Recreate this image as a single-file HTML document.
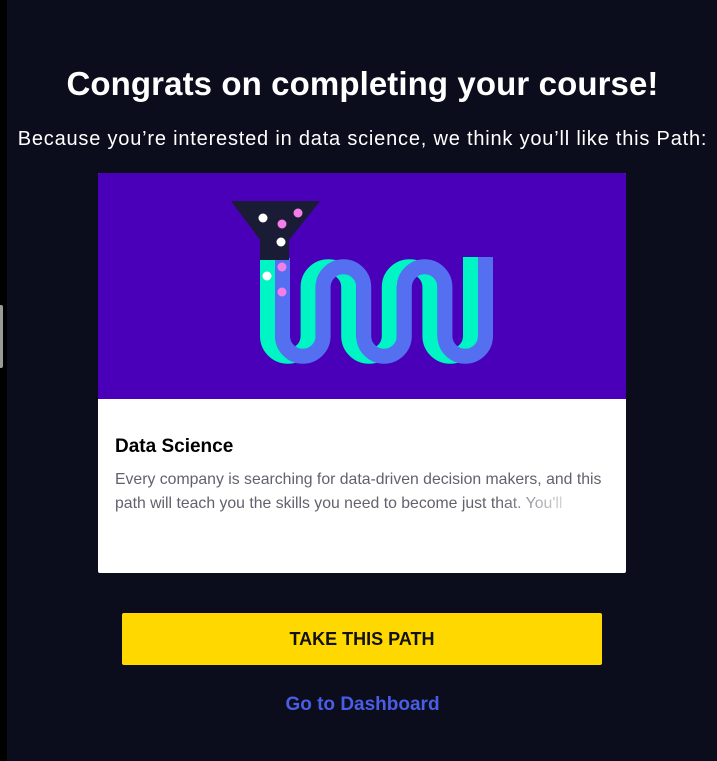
<!DOCTYPE html>
<html><head><meta charset="utf-8"><style>
html,body{margin:0;padding:0;width:717px;height:761px;overflow:hidden;background:#0b0d1c;font-family:"Liberation Sans",sans-serif;}
.edge{position:absolute;left:0;top:0;width:7px;height:761px;background:#000;}
.sb{position:absolute;left:0;top:305px;width:3px;height:63px;background:#9a9a9a;border-radius:0 2px 2px 0;}
h1{position:absolute;left:0;width:725px;top:65px;margin:0;text-align:center;color:#fff;font-size:33px;font-weight:bold;letter-spacing:0.1px;white-space:nowrap;}
.sub{position:absolute;left:0;width:725px;top:128px;text-align:center;color:#fff;font-size:20px;letter-spacing:0.8px;white-space:nowrap;}
.card{position:absolute;left:98px;top:173px;width:528px;height:400px;background:#fff;border-radius:2px;overflow:hidden;}
.img{position:absolute;left:0;top:0;width:528px;height:226px;background:#4a00b9;}
.t{position:absolute;left:17px;top:263px;font-size:19px;font-weight:bold;color:#000;}
.d{position:absolute;left:17px;top:295px;width:510px;font-size:15.8px;line-height:24px;color:#62626e;white-space:nowrap;}
.fade{position:absolute;left:400px;top:319px;width:128px;height:26px;background:linear-gradient(90deg,rgba(255,255,255,0),#fff 70%);}
.btn{position:absolute;left:122px;top:613px;width:480px;height:52px;background:#ffd800;border-radius:2px;text-align:center;line-height:52px;font-size:18px;font-weight:bold;color:#111;}
.lnk{position:absolute;left:0;width:725px;top:694px;text-align:center;color:#4a5de6;font-size:19px;font-weight:bold;}
</style></head><body>
<div class="edge"></div><div class="sb"></div>
<h1>Congrats on completing your course!</h1>
<div class="sub">Because you’re interested in data science, we think you’ll like this Path:</div>
<div class="card">
<div class="img">
<svg width="528" height="226" viewBox="98 173 528 226" style="position:absolute;left:0;top:0">
<path d="M267.5 258 V336 A20.3 20.3 0 0 0 308.1 336 V287 A20.3 20.3 0 0 1 348.7 287 V336 A20.3 20.3 0 0 0 389.3 336 V287 A20.3 20.3 0 0 1 429.9 287 V336 A20.3 20.3 0 0 0 470.5 336 V257" fill="none" stroke="#00f5c4" stroke-width="15"/>
<path d="M282.5 258 V336 A20.3 20.3 0 0 0 323.1 336 V287 A20.3 20.3 0 0 1 363.7 287 V336 A20.3 20.3 0 0 0 404.3 336 V287 A20.3 20.3 0 0 1 444.9 287 V336 A20.3 20.3 0 0 0 485.5 336 V257" fill="none" stroke="#5470f0" stroke-width="15"/>
<polygon points="231,201 320,201 289,240 289,260 260,260 260,240" fill="#1a1b35"/>
<circle cx="263" cy="218" r="4.5" fill="#fff"/>
<circle cx="281" cy="242" r="4.5" fill="#fff"/>
<circle cx="267" cy="276" r="4.5" fill="#fff"/>
<circle cx="282" cy="224" r="4.5" fill="#f47ee8"/>
<circle cx="298" cy="213" r="4.5" fill="#f47ee8"/>
<circle cx="282" cy="267" r="4.5" fill="#f47ee8"/>
<circle cx="282" cy="292" r="4.5" fill="#f47ee8"/>
</svg>
</div>
<div class="t">Data Science</div>
<div class="d">Every company is searching for data-driven decision makers, and this<br>path will teach you the skills you need to become just that. You'll</div>
<div class="fade"></div>
</div>
<div class="btn">TAKE THIS PATH</div>
<div class="lnk">Go to Dashboard</div>
</body></html>
